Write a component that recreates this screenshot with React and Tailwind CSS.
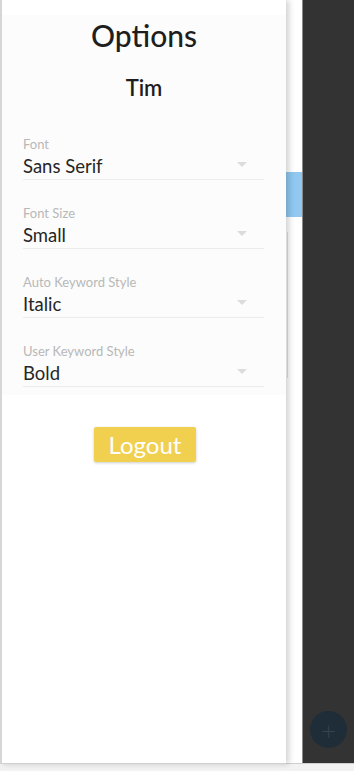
import React from "react";

const fields = [
  { label: "Font", value: "Sans Serif" },
  { label: "Font Size", value: "Small" },
  { label: "Auto Keyword Style", value: "Italic" },
  { label: "User Keyword Style", value: "Bold" },
];

function Select({ label, value }) {
  return (
    <div className="pt-[25px] first:pt-0">
      <div className="text-[13px] leading-[16px] text-[#b8b8b8]">{label}</div>
      <div className="relative h-[28px] pt-[2px] border-b border-[#ececec] w-[241px]">
        <span className="block text-[18.5px] leading-[24px] text-[#262626]">{value}</span>
        <span className="absolute left-[214px] top-[10px] w-0 h-0 border-l-[5px] border-r-[5px] border-t-[5px] border-l-transparent border-r-transparent border-t-[#dcdcdc]" />
      </div>
    </div>
  );
}

export default function App() {
  return (
    <div className="relative w-[354px] h-[771px] overflow-hidden bg-white font-['Lato','Open_Sans',sans-serif]">
      {/* page behind the drawer */}
      <div className="flex h-[763px]">
        <div className="w-[302px] flex flex-col bg-white">
          <div className="h-[172px]" />
          <div className="h-[45px] bg-[#90c8f1]" />
          <div className="h-[15px]" />
          <div className="h-[146px] ml-[287px] border-l border-[#e2e2e2]" />
        </div>
        <div className="w-px bg-[#8a8a8a]" />
        <div className="flex-1 bg-[#333333] flex flex-col justify-end items-center pb-[15px]">
          <div className="w-[37px] h-[37px] rounded-full bg-[#1e2d38] flex items-center justify-center text-[#34434e] text-[26px] leading-none font-light">
            +
          </div>
        </div>
      </div>
      <div className="h-[8px] border-t border-[#cfcfcf] bg-[#f2f2f2]" />

      {/* drawer */}
      <div className="absolute left-0 top-0 w-[286px] h-[764px] bg-white border-l-2 border-[#d6d6d6] border-b border-b-[#d0d0d0] shadow-[3px_0_6px_rgba(0,0,0,0.18)]">
        <div className="mt-[15px] bg-[#fcfcfc] h-[380px] flex flex-col">
          <h1 className="text-center text-[30px] leading-[36px] text-[#1e1e1e] font-medium mt-[2px]">Options</h1>
          <h2 className="text-center text-[22px] leading-[26px] text-[#1e1e1e] font-semibold mt-[22px]">Tim</h2>
          <div className="pl-[21px] mt-[35px]">
            {fields.map((f) => (
              <Select key={f.label} label={f.label} value={f.value} />
            ))}
          </div>
        </div>
        <div className="flex justify-center mt-[32px]">
          <button className="w-[102px] h-[35px] ml-[2px] bg-[#f2d04f] text-white text-[24px] leading-[35px] rounded-[2px] shadow-[0_1px_3px_rgba(0,0,0,0.2)]">
            Logout
          </button>
        </div>
      </div>
    </div>
  );
}
